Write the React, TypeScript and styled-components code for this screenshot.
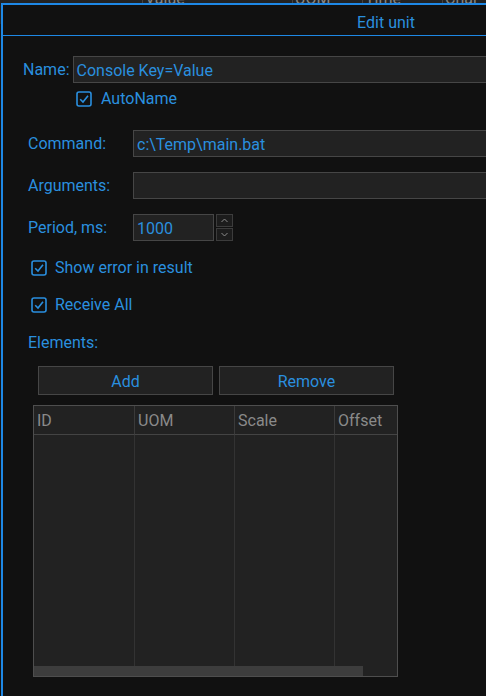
import React from "react";
import styled, { createGlobalStyle } from "styled-components";

const GlobalStyle = createGlobalStyle`
  html, body {
    margin: 0;
    padding: 0;
    background: #111111;
    overflow: hidden;
  }
  body {
    font-family: Roboto, "Noto Sans", "Liberation Sans", sans-serif;
  }
`;

const BLUE = "#2a8fdf";

const Screen = styled.div`
  position: relative;
  width: 486px;
  height: 696px;
  overflow: hidden;
  background: #141414;
`;

/* table header of the window behind the dialog */
const BackHeader = styled.div`
  display: grid;
  grid-template-columns: 142px 150px 70px 80px 100px;
  height: 24px;
  background: #222;
`;

const BackCell = styled.div`
  border-left: 1px solid #444;
  color: #888;
  font-size: 16px;
  line-height: 16px;
  padding: 0 0 0 2px;
  margin-top: -9px;
  &:first-child {
    border-left: none;
  }
`;

const Dialog = styled.div`
  position: absolute;
  left: 1px;
  top: 3px;
  width: 770px;
  height: 760px;
  box-sizing: border-box;
  border: 2px solid #1e88e5;
  background: #111111;
  display: flex;
  flex-direction: column;
`;

const TitleBar = styled.div`
  box-sizing: border-box;
  height: 31px;
  padding-top: 5px;
  border-bottom: 1px solid #1e88e5;
  display: flex;
  align-items: center;
  justify-content: center;
  color: ${BLUE};
  font-size: 16px;
`;

const Body = styled.div`
  display: flex;
  flex-direction: column;
`;

const Label = styled.span<{ $width?: number }>`
  color: ${BLUE};
  font-size: 16px;
  line-height: 18px;
  padding-top: 1px;
  width: ${(p) => (p.$width ? `${p.$width}px` : "auto")};
  flex-shrink: 0;
`;

const Row = styled.div<{ $top: number; $left: number; $height: number; $gap?: number }>`
  display: flex;
  align-items: center;
  margin-top: ${(p) => p.$top}px;
  margin-left: ${(p) => p.$left}px;
  height: ${(p) => p.$height}px;
  gap: ${(p) => p.$gap ?? 0}px;
`;

const TextBox = styled.div<{ $width: number }>`
  box-sizing: border-box;
  width: ${(p) => p.$width}px;
  height: 27px;
  border: 1px solid #464646;
  background: #222222;
  color: ${BLUE};
  font-size: 16px;
  display: flex;
  align-items: center;
  padding: 1px 0 0 3px;
  flex-shrink: 0;
`;

const Spinner = styled.div`
  display: flex;
  flex-direction: column;
  margin-left: 2px;
  gap: 1px;
  height: 27px;
`;

const SpinButton = styled.div`
  box-sizing: border-box;
  width: 17px;
  height: 13px;
  border: 1px solid #3c3c3c;
  background: #1c1c1c;
  display: flex;
  align-items: center;
  justify-content: center;
`;

const Box = styled.svg`
  width: 16px;
  height: 16px;
  flex-shrink: 0;
`;

const CheckBox = () => (
  <Box viewBox="0 0 16 16">
    <rect x="1" y="1" width="14" height="14" rx="2" fill="none" stroke={BLUE} strokeWidth="1.6" />
    <polyline points="4.2,8.2 7,11 12,4.8" fill="none" stroke={BLUE} strokeWidth="1.6" />
  </Box>
);

const Buttons = styled.div`
  display: flex;
  gap: 6px;
  margin-top: 15px;
  margin-left: 35px;
`;

const Button = styled.div`
  box-sizing: border-box;
  width: 175px;
  height: 29px;
  border: 1px solid #464646;
  background: #222222;
  color: ${BLUE};
  font-size: 16px;
  display: flex;
  align-items: center;
  justify-content: center;
  padding-top: 1px;
`;

const Table = styled.div`
  position: relative;
  box-sizing: border-box;
  margin-top: 10px;
  margin-left: 30px;
  width: 365px;
  height: 272px;
  border: 1px solid #4e4e4e;
  background: #222222;
  display: grid;
  grid-template-columns: 100px 100px 100px 1fr;
  grid-template-rows: 29px 1fr;
`;

const HeadCell = styled.div`
  border-bottom: 1px solid #444;
  border-left: 1px solid #3a3a3a;
  color: #8a8a8a;
  font-size: 16px;
  display: flex;
  align-items: center;
  padding-left: 3px;
  &:first-child {
    border-left: none;
  }
`;

const BodyCell = styled.div`
  border-left: 1px solid #333;
  &:nth-child(5) {
    border-left: none;
  }
`;

const ScrollBar = styled.div`
  position: absolute;
  left: 0;
  right: 0;
  bottom: 0;
  height: 10px;
`;

const Thumb = styled.div`
  width: 329px;
  height: 100%;
  background: #3d3d3d;
`;

const Arrow = ({ up }: { up?: boolean }) => (
  <svg width="7" height="5" viewBox="0 0 7 5">
    <polyline
      points={up ? "0.5,4 3.5,1 6.5,4" : "0.5,1 3.5,4 6.5,1"}
      fill="none"
      stroke="#8a8a8a"
      strokeWidth="1"
    />
  </svg>
);

export default function App() {
  const backCols = ["", "Value", "UOM", "Time", "Char"];
  const cols = ["ID", "UOM", "Scale", "Offset"];
  return (
    <>
      <GlobalStyle />
      <Screen>
        <BackHeader>
          {backCols.map((c, i) => (
            <BackCell key={i}>{c}</BackCell>
          ))}
        </BackHeader>
        <Dialog>
          <TitleBar>Edit unit</TitleBar>
          <Body>
            <Row $top={20} $left={20} $height={27} $gap={3}>
              <Label>Name:</Label>
              <TextBox $width={600}>Console Key=Value</TextBox>
            </Row>
            <Row $top={7} $left={73} $height={17} $gap={9}>
              <CheckBox />
              <Label>AutoName</Label>
            </Row>
            <Row $top={23} $left={25} $height={27}>
              <Label $width={105}>Command:</Label>
              <TextBox $width={600}>c:\Temp\main.bat</TextBox>
            </Row>
            <Row $top={15} $left={25} $height={27}>
              <Label $width={105}>Arguments:</Label>
              <TextBox $width={600} />
            </Row>
            <Row $top={15} $left={25} $height={27}>
              <Label $width={105}>Period, ms:</Label>
              <TextBox $width={81}>1000</TextBox>
              <Spinner>
                <SpinButton>
                  <Arrow up />
                </SpinButton>
                <SpinButton>
                  <Arrow />
                </SpinButton>
              </Spinner>
            </Row>
            <Row $top={18} $left={28} $height={17} $gap={8}>
              <CheckBox />
              <Label>Show error in result</Label>
            </Row>
            <Row $top={20} $left={28} $height={17} $gap={8}>
              <CheckBox />
              <Label>Receive All</Label>
            </Row>
            <Row $top={20} $left={25} $height={18}>
              <Label>Elements:</Label>
            </Row>
            <Buttons>
              <Button>Add</Button>
              <Button>Remove</Button>
            </Buttons>
            <Table>
              {cols.map((c) => (
                <HeadCell key={c}>{c}</HeadCell>
              ))}
              {cols.map((c) => (
                <BodyCell key={c + "b"} />
              ))}
              <ScrollBar>
                <Thumb />
              </ScrollBar>
            </Table>
          </Body>
        </Dialog>
      </Screen>
    </>
  );
}
